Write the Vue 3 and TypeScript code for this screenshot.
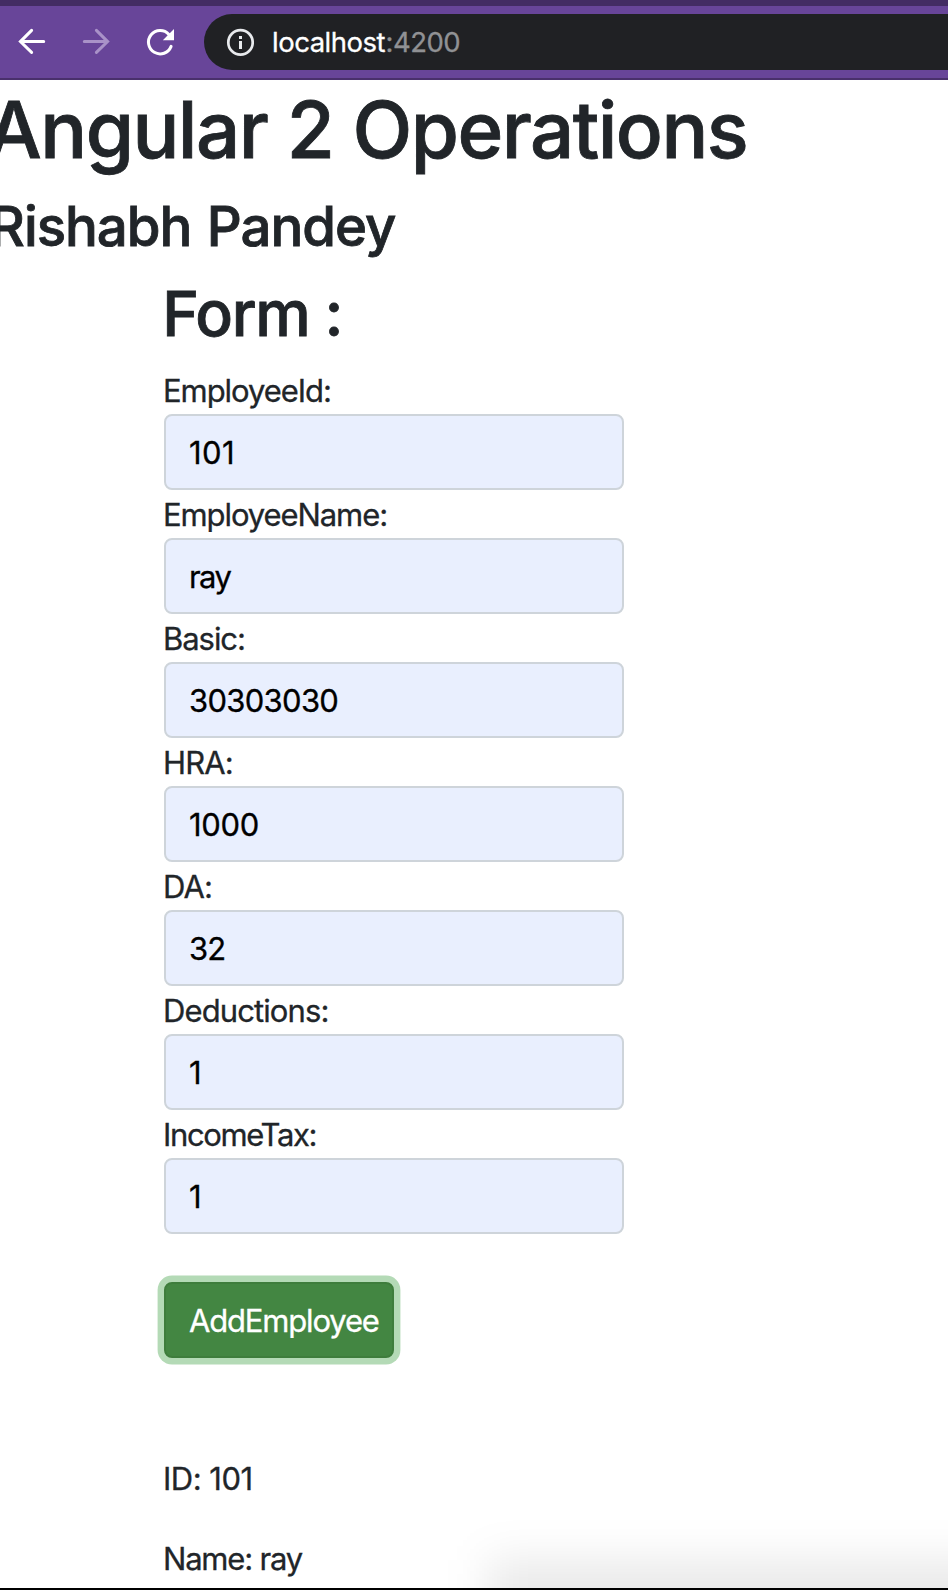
<script setup lang="ts">
import { reactive } from 'vue'

interface Field {
  label: string
  value: string
  labelTracking: number
  valueTracking: number
}

const fields = reactive<Field[]>([
  { label: 'EmployeeId:', value: '101', labelTracking: -1.06, valueTracking: 0.4 },
  { label: 'EmployeeName:', value: 'ray', labelTracking: -1.09, valueTracking: -1.6 },
  { label: 'Basic:', value: '30303030', labelTracking: -1.05, valueTracking: -0.7 },
  { label: 'HRA:', value: '1000', labelTracking: -0.9, valueTracking: -0.3 },
  { label: 'DA:', value: '32', labelTracking: -0.9, valueTracking: -1 },
  { label: 'Deductions:', value: '1', labelTracking: -0.9, valueTracking: 0 },
  { label: 'IncomeTax:', value: '1', labelTracking: -1.37, valueTracking: 0 },
])

const details = [
  { text: 'ID: 101', tracking: -0.5 },
  { text: 'Name: ray', tracking: -1.2 },
]

const px = (n: number) => ({ letterSpacing: `${n}px` })
</script>

<template>
  <div class="window">
    <header class="toolbar">
      <svg class="nav" width="204" height="72" viewBox="0 6 204 72" fill="none">
        <g stroke="#fff" stroke-width="3" stroke-linecap="round">
          <path d="M43.7 41.6H21M31.6 30.4 20.4 41.6 31.6 52.4" />
          <path stroke="#a992c8" d="M84.3 41.6H107M96.4 30.4 107.6 41.6 96.4 52.4" />
          <path d="M168.9 34.4A11.7 11.7 0 1 0 171.1 46.4" />
        </g>
        <path fill="#fff" d="M174 29V40.2H162.8Z" />
      </svg>
      <div class="address">
        <svg class="info" width="28" height="28" viewBox="0 0 28 28">
          <circle cx="14.5" cy="14.4" r="12.2" fill="none" stroke="#e8eaed" stroke-width="2.7" />
          <path fill="#e8eaed" d="M13 8h3v3h-3zM13 13h3v8h-3z" />
        </svg>
        <span class="host">localhost</span><span class="port">:4200</span>
      </div>
    </header>

    <main class="page">
      <h1>Angular 2 Operations</h1>
      <h3>Rishabh Pandey</h3>
      <section class="content">
        <h2>Form :</h2>
        <form @submit.prevent>
          <div v-for="(f, i) in fields" :key="f.label" class="field">
            <label :for="`field-${i}`" :style="px(f.labelTracking)">{{ f.label }}</label>
            <input :id="`field-${i}`" v-model="f.value" type="text" :style="px(f.valueTracking)" />
          </div>
          <button type="submit">AddEmployee</button>
        </form>
        <div class="details">
          <p v-for="d in details" :key="d.text" :style="px(d.tracking)">{{ d.text }}</p>
        </div>
      </section>
      <div class="shade"></div>
    </main>
  </div>
</template>

<style>
body {
  margin: 0;
  background: #fff;
}
</style>

<style scoped>
.window {
  box-sizing: border-box;
  width: 948px;
  height: 1590px;
  display: flex;
  flex-direction: column;
  overflow: hidden;
  border-top: 6px solid #432c63;
  border-bottom: 2px solid #000;
  background: #fff;
  color: #212529;
  font-family: Inter, 'Liberation Sans', sans-serif;
  -webkit-text-stroke: 0.3px currentColor;
}
.toolbar {
  box-sizing: border-box;
  flex: none;
  height: 74px;
  display: flex;
  background: #684599;
  border-bottom: 2px solid #49306c;
}
.nav {
  flex: none;
}
.address {
  box-sizing: border-box;
  flex: 1;
  height: 56px;
  margin-top: 8px;
  padding-left: 22px;
  display: flex;
  align-items: center;
  background: #202124;
  border-radius: 28px 0 0 28px;
  font-size: 27.5px;
  line-height: 56px;
}
.info {
  margin-right: 18px;
}
.host {
  width: 113.5px;
  color: #fff;
  letter-spacing: -0.5px;
}
.port {
  color: #909194;
  letter-spacing: -0.5px;
}
.page {
  position: relative;
  flex: 1;
  min-height: 0;
  overflow: hidden;
}
h1,
h2,
h3 {
  font-weight: 500;
  white-space: nowrap;
  -webkit-text-stroke: 0.8px currentColor;
}
h1 {
  margin: 0 0 15px -13.5px;
  padding-top: 1px;
  font-size: 78px;
  line-height: 97px;
  letter-spacing: -1.53px;
}
h3 {
  margin: 0 0 16px -10.4px;
  font-size: 54.6px;
  line-height: 66px;
  letter-spacing: -1.05px;
  word-spacing: 2px;
}
h2 {
  margin: 0 0 14px -1.8px;
  font-size: 62.5px;
  line-height: 77px;
  letter-spacing: -1.44px;
}
.content {
  padding-left: 164px;
}
.field {
  width: 460px;
}
label {
  box-sizing: border-box;
  display: block;
  height: 48px;
  margin-left: -1px;
  padding-top: 1px;
  font-size: 31px;
  line-height: 48px;
}
input {
  box-sizing: border-box;
  display: block;
  width: 460px;
  height: 76px;
  margin: 0;
  padding: 12px 23px;
  border: 2px solid #ced4da;
  border-radius: 8px;
  background: #e9effe;
  color: #000;
  font: 400 31px/48px Inter, 'Liberation Sans', sans-serif;
  outline: none;
}
button {
  box-sizing: border-box;
  display: block;
  width: 230px;
  height: 76px;
  margin: 48px 0 0;
  padding: 2px 0 0 23px;
  border: 2px solid #3e7d3c;
  border-radius: 8px;
  background: #438642;
  box-shadow: 0 0 0 6.4px #b4dab6;
  color: #fff;
  font: 400 31px/48px Inter, 'Liberation Sans', sans-serif;
  letter-spacing: -1.17px;
  text-align: left;
}
.details {
  margin: 97px 0 0 -1px;
}
p {
  margin: 0 0 32px;
  font-size: 31px;
  line-height: 48px;
}
.shade {
  position: absolute;
  left: 488px;
  top: 1480px;
  width: 700px;
  height: 300px;
  background: rgba(0, 0, 0, 0.085);
  filter: blur(22px);
  pointer-events: none;
}
</style>
